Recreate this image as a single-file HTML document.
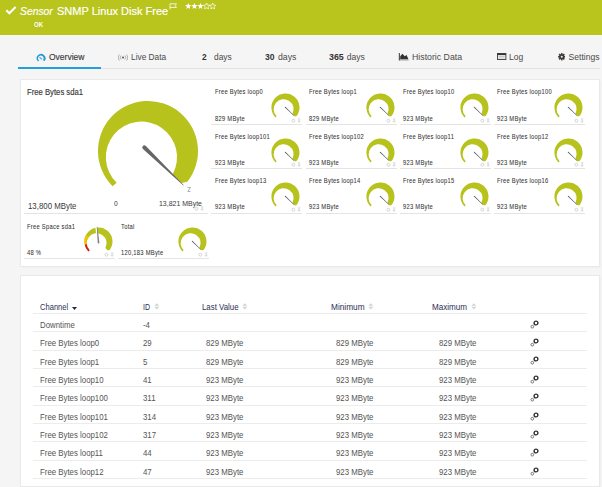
<!DOCTYPE html>
<html><head><meta charset="utf-8"><style>
*{margin:0;padding:0;box-sizing:border-box}
html,body{width:602px;height:487px;overflow:hidden;background:#f5f5f5;font-family:"Liberation Sans",sans-serif;}
.a{position:absolute;white-space:nowrap;line-height:1;transform-origin:0 0}
.card{position:absolute;left:20px;width:580px;background:#fff;box-shadow:0 0 0 1px #e9e9e9, 1px 1px 2px rgba(0,0,0,0.07)}
.tl{position:absolute;height:1px;background:#e4e4e4}
</style></head>
<body>
<div class="a" style="left:0;top:0;width:602px;height:35px;background:#b9c41c"></div>
<svg class="a" style="left:5px;top:6px" width="12" height="9" viewBox="0 0 12 9"><path d="M1.3 4.3 L4.3 7.3 L10.6 1.0" stroke="#fff" stroke-width="2.1" fill="none"/></svg>
<div class="a" style="left:20.20px;top:4.98px;font-size:11.6px;color:#fff;font-style:italic;transform:scaleX(0.891);-webkit-text-stroke:0.2px #fff;">Sensor</div>
<div class="a" style="left:56.50px;top:4.98px;font-size:11.6px;color:#fff;transform:scaleX(0.950);-webkit-text-stroke:0.2px #fff;">SNMP Linux Disk Free</div>
<svg class="a" style="left:169px;top:3px" width="9" height="7" viewBox="0 0 9 7"><path d="M1 6.5 V0.8 H7.5 L6 2.6 L7.5 4.4 H1" stroke="#fff" stroke-width="0.8" fill="none"/></svg>
<svg class="a" style="left:185px;top:2px" width="32" height="8" viewBox="0 0 32 8"><polygon points="3.30,1.00 4.17,3.10 6.44,3.28 4.71,4.76 5.24,6.97 3.30,5.79 1.36,6.97 1.89,4.76 0.16,3.28 2.43,3.10" fill="#fff"/><polygon points="9.40,1.00 10.27,3.10 12.54,3.28 10.81,4.76 11.34,6.97 9.40,5.79 7.46,6.97 7.99,4.76 6.26,3.28 8.53,3.10" fill="#fff"/><polygon points="15.50,1.00 16.37,3.10 18.64,3.28 16.91,4.76 17.44,6.97 15.50,5.79 13.56,6.97 14.09,4.76 12.36,3.28 14.63,3.10" fill="#fff"/><polygon points="21.60,1.00 22.47,3.10 24.74,3.28 23.01,4.76 23.54,6.97 21.60,5.79 19.66,6.97 20.19,4.76 18.46,3.28 20.73,3.10" fill="none" stroke="#fff" stroke-width="0.7"/><polygon points="27.70,1.00 28.57,3.10 30.84,3.28 29.11,4.76 29.64,6.97 27.70,5.79 25.76,6.97 26.29,4.76 24.56,3.28 26.83,3.10" fill="none" stroke="#fff" stroke-width="0.7"/></svg>
<div class="a" style="left:34.20px;top:20.87px;font-size:7px;color:#fff;font-weight:bold;transform:scaleX(0.867);">OK</div>
<div class="a" style="left:18px;top:68px;width:582px;height:1px;background:#e2e2e2"></div>
<div class="a" style="left:18px;top:67px;width:83px;height:2px;background:#23a0dc"></div>
<svg class="a" style="left:35.5px;top:53px;overflow:visible" width="10" height="9" viewBox="-5 -5 10 9"><g transform="translate(0.1 0.3) scale(0.088)"><path d="M -35.36 35.36 A 50 50 0 1 1 39.4 30.78 L 20 21 A 31 31 0 1 0 -23 24 Z" fill="#1f9ad6"/></g><path d="M -1.6 -0.8 L 1.0 1.2" stroke="#4aa6dc" stroke-width="1.1"/></svg>
<div class="a" style="left:48.90px;top:52.92px;font-size:8.6px;color:#3a3a3a;transform:scaleX(0.990);-webkit-text-stroke:0.15px #3a3a3a;">Overview</div>
<svg class="a" style="left:117.5px;top:53.5px" width="10" height="7" viewBox="0 0 10 7"><circle cx="5" cy="3.5" r="1" fill="#555"/><path d="M3.2 1.6 A2.6 2.6 0 0 0 3.2 5.4 M6.8 1.6 A2.6 2.6 0 0 1 6.8 5.4 M1.5 0.5 A4.2 4.2 0 0 0 1.5 6.5 M8.5 0.5 A4.2 4.2 0 0 1 8.5 6.5" stroke="#999" stroke-width="0.8" fill="none"/></svg>
<div class="a" style="left:130.60px;top:52.92px;font-size:8.6px;color:#4a4a4a;transform:scaleX(0.969);">Live Data</div>
<div class="a" style="left:202.40px;top:52.92px;font-size:8.6px;color:#333;font-weight:bold;transform:scaleX(0.962);">2</div>
<div class="a" style="left:213.60px;top:52.92px;font-size:8.6px;color:#4a4a4a;transform:scaleX(0.974);">days</div>
<div class="a" style="left:265.00px;top:52.92px;font-size:8.6px;color:#333;font-weight:bold;transform:scaleX(0.993);">30</div>
<div class="a" style="left:278.40px;top:52.92px;font-size:8.6px;color:#4a4a4a;transform:scaleX(1.008);">days</div>
<div class="a" style="left:329.30px;top:52.92px;font-size:8.6px;color:#333;font-weight:bold;transform:scaleX(1.025);">365</div>
<div class="a" style="left:346.70px;top:52.92px;font-size:8.6px;color:#4a4a4a;">days</div>
<svg class="a" style="left:398px;top:53px" width="11" height="8" viewBox="0 0 11 8"><path d="M1.4 0 V7.6" stroke="#555" stroke-width="1.2" fill="none"/><path d="M2.2 6.2 V3.2 L4.4 0.8 L6.8 3.3 L8.6 2.0 L10.2 5.8 V6.2 Z" fill="#333"/><path d="M2 6.9 H10.6" stroke="#9a9a9a" stroke-width="1.1"/></svg>
<div class="a" style="left:412.30px;top:52.92px;font-size:8.6px;color:#4a4a4a;transform:scaleX(1.018);">Historic Data</div>
<svg class="a" style="left:496.6px;top:53.2px" width="10" height="8" viewBox="0 0 10 8"><rect x="0.5" y="0.5" width="8.4" height="6" fill="none" stroke="#4a4a4a" stroke-width="1"/><rect x="0.5" y="0.5" width="8.4" height="1.6" fill="#333"/><path d="M1.6 3.5 H7.8 M1.6 5 H7.8" stroke="#bbb" stroke-width="0.8"/></svg>
<div class="a" style="left:509.00px;top:52.92px;font-size:8.6px;color:#4a4a4a;transform:scaleX(0.990);">Log</div>
<svg class="a" style="left:557.5px;top:53.0px" width="7.5" height="7.5" viewBox="-4 -4 8 8"><g fill="#3a3a3a"><circle r="2.7"/><rect x="-0.85" y="-3.9" width="1.7" height="2.2" transform="rotate(0)"/><rect x="-0.85" y="-3.9" width="1.7" height="2.2" transform="rotate(45)"/><rect x="-0.85" y="-3.9" width="1.7" height="2.2" transform="rotate(90)"/><rect x="-0.85" y="-3.9" width="1.7" height="2.2" transform="rotate(135)"/><rect x="-0.85" y="-3.9" width="1.7" height="2.2" transform="rotate(180)"/><rect x="-0.85" y="-3.9" width="1.7" height="2.2" transform="rotate(225)"/><rect x="-0.85" y="-3.9" width="1.7" height="2.2" transform="rotate(270)"/><rect x="-0.85" y="-3.9" width="1.7" height="2.2" transform="rotate(315)"/></g><circle r="1.1" fill="#f5f5f5"/></svg>
<div class="a" style="left:568.50px;top:52.92px;font-size:8.6px;color:#4a4a4a;">Settings</div>
<div class="card" style="left:21px;width:578px;top:80px;height:186px"></div>
<div class="card" style="left:21px;width:578px;top:276px;height:210px"></div>
<div class="a" style="left:27.00px;top:88.12px;font-size:8.6px;color:#3a3a3a;transform:scaleX(0.896);-webkit-text-stroke:0.15px #3a3a3a;">Free Bytes sda1</div>
<svg class="a" style="left:92.90px;top:95.75px;overflow:visible" width="110.00" height="110.00" viewBox="-55 -55 110 110"><path d="M -35.36 35.36 A 50 50 0 1 1 39.4 30.78 L 33.4 31.9 L 24.6 23.4 A 35.6 35.6 0 1 0 -31.37 31.72 Z" fill="#b7c21d"/><g transform="rotate(44)"><path d="M -5 -2.1 L 49.5 -0.3 L 49.5 0.3 L -5 2.1 A 2.1 2.1 0 0 1 -5 -2.1 Z" fill="#666"/></g></svg>
<div class="a" style="left:27.50px;top:202.86px;font-size:8.2px;color:#3a3a3a;transform:scaleX(0.959);">13,800 MByte</div>
<div class="a" style="left:113.70px;top:199.54px;font-size:7.4px;color:#3a3a3a;transform:scaleX(0.899);">0</div>
<div class="a" style="left:158.50px;top:199.54px;font-size:7.4px;color:#3a3a3a;transform:scaleX(0.942);">13,821 MByte</div>
<svg class="a" style="left:194.00px;top:206.00px" width="12" height="5" viewBox="0 0 12 5"><circle cx="2.4" cy="2.7" r="1.45" fill="none" stroke="#cfcfcf" stroke-width="0.9"/><path d="M6.9 0.9 H9.3 M8.1 0.9 V3.3 M6.7 3.3 H9.5 M8.1 3.3 V4.8" stroke="#d2d2d2" stroke-width="0.8"/></svg>
<svg class="a" style="left:187px;top:187px" width="4" height="5" viewBox="0 0 4 5"><path d="M0.5 0.5 H3.5 L0.8 4.5 H3.5" stroke="#8a96b0" stroke-width="0.7" fill="none"/></svg>
<div class="tl" style="left:24px;top:213px;width:184px"></div>
<div class="a" style="left:215.00px;top:89.31px;font-size:6.6px;color:#333333;transform:scaleX(0.88);letter-spacing:0.3px;-webkit-text-stroke:0.05px #383838;">Free Bytes loop0</div>
<div class="a" style="left:215.00px;top:115.61px;font-size:6.6px;color:#333333;transform:scaleX(0.88);letter-spacing:0.3px;-webkit-text-stroke:0.05px #383838;">829 MByte</div>
<svg class="a" style="left:270.15px;top:92.45px;overflow:visible" width="30.91" height="30.91" viewBox="-55 -55 110 110"><path d="M -35.36 35.36 A 50 50 0 1 1 39.4 30.78 L 33.4 31.9 L 24.6 23.4 A 35.6 35.6 0 1 0 -31.37 31.72 Z" fill="#b7c21d"/><g transform="rotate(44)"><path d="M -1 -1.8 L 42 -0.9 L 42 0.9 L -1 1.8 A 1.8 1.8 0 0 1 -1 -1.8 Z" fill="#555"/></g></svg>
<svg class="a" style="left:291.00px;top:118.10px" width="12" height="5" viewBox="0 0 12 5"><circle cx="2.4" cy="2.7" r="1.45" fill="none" stroke="#cfcfcf" stroke-width="0.9"/><path d="M6.9 0.9 H9.3 M8.1 0.9 V3.3 M6.7 3.3 H9.5 M8.1 3.3 V4.8" stroke="#d2d2d2" stroke-width="0.8"/></svg>
<div class="tl" style="left:211.00px;top:124.20px;width:91px"></div>
<div class="a" style="left:309.00px;top:89.31px;font-size:6.6px;color:#333333;transform:scaleX(0.88);letter-spacing:0.3px;-webkit-text-stroke:0.05px #383838;">Free Bytes loop1</div>
<div class="a" style="left:309.00px;top:115.61px;font-size:6.6px;color:#333333;transform:scaleX(0.88);letter-spacing:0.3px;-webkit-text-stroke:0.05px #383838;">829 MByte</div>
<svg class="a" style="left:364.65px;top:92.45px;overflow:visible" width="30.91" height="30.91" viewBox="-55 -55 110 110"><path d="M -35.36 35.36 A 50 50 0 1 1 39.4 30.78 L 33.4 31.9 L 24.6 23.4 A 35.6 35.6 0 1 0 -31.37 31.72 Z" fill="#b7c21d"/><g transform="rotate(44)"><path d="M -1 -1.8 L 42 -0.9 L 42 0.9 L -1 1.8 A 1.8 1.8 0 0 1 -1 -1.8 Z" fill="#555"/></g></svg>
<svg class="a" style="left:385.50px;top:118.10px" width="12" height="5" viewBox="0 0 12 5"><circle cx="2.4" cy="2.7" r="1.45" fill="none" stroke="#cfcfcf" stroke-width="0.9"/><path d="M6.9 0.9 H9.3 M8.1 0.9 V3.3 M6.7 3.3 H9.5 M8.1 3.3 V4.8" stroke="#d2d2d2" stroke-width="0.8"/></svg>
<div class="tl" style="left:305.50px;top:124.20px;width:91px"></div>
<div class="a" style="left:402.80px;top:89.31px;font-size:6.6px;color:#333333;transform:scaleX(0.88);letter-spacing:0.3px;-webkit-text-stroke:0.05px #383838;">Free Bytes loop10</div>
<div class="a" style="left:402.80px;top:115.61px;font-size:6.6px;color:#333333;transform:scaleX(0.88);letter-spacing:0.3px;-webkit-text-stroke:0.05px #383838;">923 MByte</div>
<svg class="a" style="left:459.15px;top:92.45px;overflow:visible" width="30.91" height="30.91" viewBox="-55 -55 110 110"><path d="M -35.36 35.36 A 50 50 0 1 1 39.4 30.78 L 33.4 31.9 L 24.6 23.4 A 35.6 35.6 0 1 0 -31.37 31.72 Z" fill="#b7c21d"/><g transform="rotate(44)"><path d="M -1 -1.8 L 42 -0.9 L 42 0.9 L -1 1.8 A 1.8 1.8 0 0 1 -1 -1.8 Z" fill="#555"/></g></svg>
<svg class="a" style="left:480.00px;top:118.10px" width="12" height="5" viewBox="0 0 12 5"><circle cx="2.4" cy="2.7" r="1.45" fill="none" stroke="#cfcfcf" stroke-width="0.9"/><path d="M6.9 0.9 H9.3 M8.1 0.9 V3.3 M6.7 3.3 H9.5 M8.1 3.3 V4.8" stroke="#d2d2d2" stroke-width="0.8"/></svg>
<div class="tl" style="left:400.00px;top:124.20px;width:91px"></div>
<div class="a" style="left:496.90px;top:89.31px;font-size:6.6px;color:#333333;transform:scaleX(0.88);letter-spacing:0.3px;-webkit-text-stroke:0.05px #383838;">Free Bytes loop100</div>
<div class="a" style="left:496.90px;top:115.61px;font-size:6.6px;color:#333333;transform:scaleX(0.88);letter-spacing:0.3px;-webkit-text-stroke:0.05px #383838;">923 MByte</div>
<svg class="a" style="left:553.14px;top:92.45px;overflow:visible" width="30.91" height="30.91" viewBox="-55 -55 110 110"><path d="M -35.36 35.36 A 50 50 0 1 1 39.4 30.78 L 33.4 31.9 L 24.6 23.4 A 35.6 35.6 0 1 0 -31.37 31.72 Z" fill="#b7c21d"/><g transform="rotate(44)"><path d="M -1 -1.8 L 42 -0.9 L 42 0.9 L -1 1.8 A 1.8 1.8 0 0 1 -1 -1.8 Z" fill="#555"/></g></svg>
<svg class="a" style="left:574.00px;top:118.10px" width="12" height="5" viewBox="0 0 12 5"><circle cx="2.4" cy="2.7" r="1.45" fill="none" stroke="#cfcfcf" stroke-width="0.9"/><path d="M6.9 0.9 H9.3 M8.1 0.9 V3.3 M6.7 3.3 H9.5 M8.1 3.3 V4.8" stroke="#d2d2d2" stroke-width="0.8"/></svg>
<div class="tl" style="left:494.00px;top:124.20px;width:91px"></div>
<div class="a" style="left:215.00px;top:133.56px;font-size:6.6px;color:#333333;transform:scaleX(0.88);letter-spacing:0.3px;-webkit-text-stroke:0.05px #383838;">Free Bytes loop101</div>
<div class="a" style="left:215.00px;top:159.86px;font-size:6.6px;color:#333333;transform:scaleX(0.88);letter-spacing:0.3px;-webkit-text-stroke:0.05px #383838;">923 MByte</div>
<svg class="a" style="left:270.15px;top:136.69px;overflow:visible" width="30.91" height="30.91" viewBox="-55 -55 110 110"><path d="M -35.36 35.36 A 50 50 0 1 1 39.4 30.78 L 33.4 31.9 L 24.6 23.4 A 35.6 35.6 0 1 0 -31.37 31.72 Z" fill="#b7c21d"/><g transform="rotate(44)"><path d="M -1 -1.8 L 42 -0.9 L 42 0.9 L -1 1.8 A 1.8 1.8 0 0 1 -1 -1.8 Z" fill="#555"/></g></svg>
<svg class="a" style="left:291.00px;top:162.35px" width="12" height="5" viewBox="0 0 12 5"><circle cx="2.4" cy="2.7" r="1.45" fill="none" stroke="#cfcfcf" stroke-width="0.9"/><path d="M6.9 0.9 H9.3 M8.1 0.9 V3.3 M6.7 3.3 H9.5 M8.1 3.3 V4.8" stroke="#d2d2d2" stroke-width="0.8"/></svg>
<div class="tl" style="left:211.00px;top:168.45px;width:91px"></div>
<div class="a" style="left:309.00px;top:133.56px;font-size:6.6px;color:#333333;transform:scaleX(0.88);letter-spacing:0.3px;-webkit-text-stroke:0.05px #383838;">Free Bytes loop102</div>
<div class="a" style="left:309.00px;top:159.86px;font-size:6.6px;color:#333333;transform:scaleX(0.88);letter-spacing:0.3px;-webkit-text-stroke:0.05px #383838;">923 MByte</div>
<svg class="a" style="left:364.65px;top:136.69px;overflow:visible" width="30.91" height="30.91" viewBox="-55 -55 110 110"><path d="M -35.36 35.36 A 50 50 0 1 1 39.4 30.78 L 33.4 31.9 L 24.6 23.4 A 35.6 35.6 0 1 0 -31.37 31.72 Z" fill="#b7c21d"/><g transform="rotate(44)"><path d="M -1 -1.8 L 42 -0.9 L 42 0.9 L -1 1.8 A 1.8 1.8 0 0 1 -1 -1.8 Z" fill="#555"/></g></svg>
<svg class="a" style="left:385.50px;top:162.35px" width="12" height="5" viewBox="0 0 12 5"><circle cx="2.4" cy="2.7" r="1.45" fill="none" stroke="#cfcfcf" stroke-width="0.9"/><path d="M6.9 0.9 H9.3 M8.1 0.9 V3.3 M6.7 3.3 H9.5 M8.1 3.3 V4.8" stroke="#d2d2d2" stroke-width="0.8"/></svg>
<div class="tl" style="left:305.50px;top:168.45px;width:91px"></div>
<div class="a" style="left:402.80px;top:133.56px;font-size:6.6px;color:#333333;transform:scaleX(0.88);letter-spacing:0.3px;-webkit-text-stroke:0.05px #383838;">Free Bytes loop11</div>
<div class="a" style="left:402.80px;top:159.86px;font-size:6.6px;color:#333333;transform:scaleX(0.88);letter-spacing:0.3px;-webkit-text-stroke:0.05px #383838;">923 MByte</div>
<svg class="a" style="left:459.15px;top:136.69px;overflow:visible" width="30.91" height="30.91" viewBox="-55 -55 110 110"><path d="M -35.36 35.36 A 50 50 0 1 1 39.4 30.78 L 33.4 31.9 L 24.6 23.4 A 35.6 35.6 0 1 0 -31.37 31.72 Z" fill="#b7c21d"/><g transform="rotate(44)"><path d="M -1 -1.8 L 42 -0.9 L 42 0.9 L -1 1.8 A 1.8 1.8 0 0 1 -1 -1.8 Z" fill="#555"/></g></svg>
<svg class="a" style="left:480.00px;top:162.35px" width="12" height="5" viewBox="0 0 12 5"><circle cx="2.4" cy="2.7" r="1.45" fill="none" stroke="#cfcfcf" stroke-width="0.9"/><path d="M6.9 0.9 H9.3 M8.1 0.9 V3.3 M6.7 3.3 H9.5 M8.1 3.3 V4.8" stroke="#d2d2d2" stroke-width="0.8"/></svg>
<div class="tl" style="left:400.00px;top:168.45px;width:91px"></div>
<div class="a" style="left:496.90px;top:133.56px;font-size:6.6px;color:#333333;transform:scaleX(0.88);letter-spacing:0.3px;-webkit-text-stroke:0.05px #383838;">Free Bytes loop12</div>
<div class="a" style="left:496.90px;top:159.86px;font-size:6.6px;color:#333333;transform:scaleX(0.88);letter-spacing:0.3px;-webkit-text-stroke:0.05px #383838;">923 MByte</div>
<svg class="a" style="left:553.14px;top:136.69px;overflow:visible" width="30.91" height="30.91" viewBox="-55 -55 110 110"><path d="M -35.36 35.36 A 50 50 0 1 1 39.4 30.78 L 33.4 31.9 L 24.6 23.4 A 35.6 35.6 0 1 0 -31.37 31.72 Z" fill="#b7c21d"/><g transform="rotate(44)"><path d="M -1 -1.8 L 42 -0.9 L 42 0.9 L -1 1.8 A 1.8 1.8 0 0 1 -1 -1.8 Z" fill="#555"/></g></svg>
<svg class="a" style="left:574.00px;top:162.35px" width="12" height="5" viewBox="0 0 12 5"><circle cx="2.4" cy="2.7" r="1.45" fill="none" stroke="#cfcfcf" stroke-width="0.9"/><path d="M6.9 0.9 H9.3 M8.1 0.9 V3.3 M6.7 3.3 H9.5 M8.1 3.3 V4.8" stroke="#d2d2d2" stroke-width="0.8"/></svg>
<div class="tl" style="left:494.00px;top:168.45px;width:91px"></div>
<div class="a" style="left:215.00px;top:178.11px;font-size:6.6px;color:#333333;transform:scaleX(0.88);letter-spacing:0.3px;-webkit-text-stroke:0.05px #383838;">Free Bytes loop13</div>
<div class="a" style="left:215.00px;top:204.41px;font-size:6.6px;color:#333333;transform:scaleX(0.88);letter-spacing:0.3px;-webkit-text-stroke:0.05px #383838;">923 MByte</div>
<svg class="a" style="left:270.15px;top:181.24px;overflow:visible" width="30.91" height="30.91" viewBox="-55 -55 110 110"><path d="M -35.36 35.36 A 50 50 0 1 1 39.4 30.78 L 33.4 31.9 L 24.6 23.4 A 35.6 35.6 0 1 0 -31.37 31.72 Z" fill="#b7c21d"/><g transform="rotate(44)"><path d="M -1 -1.8 L 42 -0.9 L 42 0.9 L -1 1.8 A 1.8 1.8 0 0 1 -1 -1.8 Z" fill="#555"/></g></svg>
<svg class="a" style="left:291.00px;top:206.90px" width="12" height="5" viewBox="0 0 12 5"><circle cx="2.4" cy="2.7" r="1.45" fill="none" stroke="#cfcfcf" stroke-width="0.9"/><path d="M6.9 0.9 H9.3 M8.1 0.9 V3.3 M6.7 3.3 H9.5 M8.1 3.3 V4.8" stroke="#d2d2d2" stroke-width="0.8"/></svg>
<div class="tl" style="left:211.00px;top:213.00px;width:91px"></div>
<div class="a" style="left:309.00px;top:178.11px;font-size:6.6px;color:#333333;transform:scaleX(0.88);letter-spacing:0.3px;-webkit-text-stroke:0.05px #383838;">Free Bytes loop14</div>
<div class="a" style="left:309.00px;top:204.41px;font-size:6.6px;color:#333333;transform:scaleX(0.88);letter-spacing:0.3px;-webkit-text-stroke:0.05px #383838;">923 MByte</div>
<svg class="a" style="left:364.65px;top:181.24px;overflow:visible" width="30.91" height="30.91" viewBox="-55 -55 110 110"><path d="M -35.36 35.36 A 50 50 0 1 1 39.4 30.78 L 33.4 31.9 L 24.6 23.4 A 35.6 35.6 0 1 0 -31.37 31.72 Z" fill="#b7c21d"/><g transform="rotate(44)"><path d="M -1 -1.8 L 42 -0.9 L 42 0.9 L -1 1.8 A 1.8 1.8 0 0 1 -1 -1.8 Z" fill="#555"/></g></svg>
<svg class="a" style="left:385.50px;top:206.90px" width="12" height="5" viewBox="0 0 12 5"><circle cx="2.4" cy="2.7" r="1.45" fill="none" stroke="#cfcfcf" stroke-width="0.9"/><path d="M6.9 0.9 H9.3 M8.1 0.9 V3.3 M6.7 3.3 H9.5 M8.1 3.3 V4.8" stroke="#d2d2d2" stroke-width="0.8"/></svg>
<div class="tl" style="left:305.50px;top:213.00px;width:91px"></div>
<div class="a" style="left:402.80px;top:178.11px;font-size:6.6px;color:#333333;transform:scaleX(0.88);letter-spacing:0.3px;-webkit-text-stroke:0.05px #383838;">Free Bytes loop15</div>
<div class="a" style="left:402.80px;top:204.41px;font-size:6.6px;color:#333333;transform:scaleX(0.88);letter-spacing:0.3px;-webkit-text-stroke:0.05px #383838;">923 MByte</div>
<svg class="a" style="left:459.15px;top:181.24px;overflow:visible" width="30.91" height="30.91" viewBox="-55 -55 110 110"><path d="M -35.36 35.36 A 50 50 0 1 1 39.4 30.78 L 33.4 31.9 L 24.6 23.4 A 35.6 35.6 0 1 0 -31.37 31.72 Z" fill="#b7c21d"/><g transform="rotate(44)"><path d="M -1 -1.8 L 42 -0.9 L 42 0.9 L -1 1.8 A 1.8 1.8 0 0 1 -1 -1.8 Z" fill="#555"/></g></svg>
<svg class="a" style="left:480.00px;top:206.90px" width="12" height="5" viewBox="0 0 12 5"><circle cx="2.4" cy="2.7" r="1.45" fill="none" stroke="#cfcfcf" stroke-width="0.9"/><path d="M6.9 0.9 H9.3 M8.1 0.9 V3.3 M6.7 3.3 H9.5 M8.1 3.3 V4.8" stroke="#d2d2d2" stroke-width="0.8"/></svg>
<div class="tl" style="left:400.00px;top:213.00px;width:91px"></div>
<div class="a" style="left:496.90px;top:178.11px;font-size:6.6px;color:#333333;transform:scaleX(0.88);letter-spacing:0.3px;-webkit-text-stroke:0.05px #383838;">Free Bytes loop16</div>
<div class="a" style="left:496.90px;top:204.41px;font-size:6.6px;color:#333333;transform:scaleX(0.88);letter-spacing:0.3px;-webkit-text-stroke:0.05px #383838;">923 MByte</div>
<svg class="a" style="left:553.14px;top:181.24px;overflow:visible" width="30.91" height="30.91" viewBox="-55 -55 110 110"><path d="M -35.36 35.36 A 50 50 0 1 1 39.4 30.78 L 33.4 31.9 L 24.6 23.4 A 35.6 35.6 0 1 0 -31.37 31.72 Z" fill="#b7c21d"/><g transform="rotate(44)"><path d="M -1 -1.8 L 42 -0.9 L 42 0.9 L -1 1.8 A 1.8 1.8 0 0 1 -1 -1.8 Z" fill="#555"/></g></svg>
<svg class="a" style="left:574.00px;top:206.90px" width="12" height="5" viewBox="0 0 12 5"><circle cx="2.4" cy="2.7" r="1.45" fill="none" stroke="#cfcfcf" stroke-width="0.9"/><path d="M6.9 0.9 H9.3 M8.1 0.9 V3.3 M6.7 3.3 H9.5 M8.1 3.3 V4.8" stroke="#d2d2d2" stroke-width="0.8"/></svg>
<div class="tl" style="left:494.00px;top:213.00px;width:91px"></div>
<div class="a" style="left:26.80px;top:223.91px;font-size:6.6px;color:#333333;transform:scaleX(0.88);letter-spacing:0.3px;-webkit-text-stroke:0.05px #383838;">Free Space sda1</div>
<div class="a" style="left:26.80px;top:249.61px;font-size:6.6px;color:#333333;transform:scaleX(0.88);letter-spacing:0.3px;-webkit-text-stroke:0.05px #383838;">48 %</div>
<svg class="a" style="left:82.64px;top:226.14px;overflow:visible" width="30.91" height="30.91" viewBox="-55 -55 110 110"><path d="M -35.36 35.36 A 50 50 0 1 1 39.4 30.78 L 33.4 31.9 L 24.6 23.4 A 35.6 35.6 0 1 0 -31.37 31.72 Z" fill="#b7c21d"/><clipPath id="cy1"><polygon points="0,0 -53.93,-26.30 -55.33,-23.20 -56.56,-20.03 -57.60,-16.79 -58.46,-13.50 -59.13,-10.16 -59.61,-6.79 -59.90,-3.40 -60.00,-0.00 -59.90,3.40 -59.61,6.79 -59.13,10.16 -58.46,13.50"/></clipPath><clipPath id="cr1"><polygon points="0,0 -58.46,13.50 -57.40,17.46 -56.08,21.34 -54.49,25.12 -52.65,28.78 -50.56,32.31 -48.23,35.69 -45.68,38.90 -42.92,41.93 -39.95,44.76 -36.80,47.39 -33.48,49.79 -30.00,51.96"/></clipPath><path d="M -35.36 35.36 A 50 50 0 1 1 39.4 30.78 L 33.4 31.9 L 24.6 23.4 A 35.6 35.6 0 1 0 -31.37 31.72 Z" fill="#f2c200" clip-path="url(#cy1)"/><path d="M -35.36 35.36 A 50 50 0 1 1 39.4 30.78 L 33.4 31.9 L 24.6 23.4 A 35.6 35.6 0 1 0 -31.37 31.72 Z" fill="#e3101a" clip-path="url(#cr1)"/><g transform="rotate(-95.4)"><rect x="28" y="-6" width="27" height="4.5" fill="#fff"/></g><g transform="rotate(-95.4)"><path d="M -4 -3.0 L 53 -0.9 L 53 0.9 L -4 3.0 A 3.0 3.0 0 0 1 -4 -3.0 Z" fill="#808080"/></g></svg>
<svg class="a" style="left:103.50px;top:252.10px" width="12" height="5" viewBox="0 0 12 5"><circle cx="2.4" cy="2.7" r="1.45" fill="none" stroke="#cfcfcf" stroke-width="0.9"/><path d="M6.9 0.9 H9.3 M8.1 0.9 V3.3 M6.7 3.3 H9.5 M8.1 3.3 V4.8" stroke="#d2d2d2" stroke-width="0.8"/></svg>
<div class="tl" style="left:23.50px;top:258.20px;width:91px"></div>
<div class="a" style="left:121.30px;top:223.91px;font-size:6.6px;color:#333333;transform:scaleX(0.88);letter-spacing:0.3px;-webkit-text-stroke:0.05px #383838;">Total</div>
<div class="a" style="left:121.30px;top:249.61px;font-size:6.6px;color:#333333;transform:scaleX(0.88);letter-spacing:0.3px;-webkit-text-stroke:0.05px #383838;">120,183 MByte</div>
<svg class="a" style="left:176.64px;top:226.14px;overflow:visible" width="30.91" height="30.91" viewBox="-55 -55 110 110"><path d="M -35.36 35.36 A 50 50 0 1 1 39.4 30.78 L 33.4 31.9 L 24.6 23.4 A 35.6 35.6 0 1 0 -31.37 31.72 Z" fill="#b7c21d"/><g transform="rotate(44)"><path d="M -1 -1.8 L 42 -0.9 L 42 0.9 L -1 1.8 A 1.8 1.8 0 0 1 -1 -1.8 Z" fill="#555"/></g></svg>
<svg class="a" style="left:197.50px;top:252.10px" width="12" height="5" viewBox="0 0 12 5"><circle cx="2.4" cy="2.7" r="1.45" fill="none" stroke="#cfcfcf" stroke-width="0.9"/><path d="M6.9 0.9 H9.3 M8.1 0.9 V3.3 M6.7 3.3 H9.5 M8.1 3.3 V4.8" stroke="#d2d2d2" stroke-width="0.8"/></svg>
<div class="tl" style="left:117.50px;top:258.20px;width:91px"></div>
<div class="a" style="left:40.00px;top:302.98px;font-size:9.0px;color:#2c2f55;transform:scaleX(0.841);">Channel</div>
<svg class="a" style="left:71.8px;top:306.8px" width="5" height="3" viewBox="0 0 5 3"><path d="M0 0 H5 L2.5 3 Z" fill="#25284d"/></svg>
<div class="a" style="left:143.00px;top:302.98px;font-size:9.0px;color:#2c2f55;transform:scaleX(0.778);">ID</div>
<svg class="a" style="left:153.70px;top:303px" width="6" height="7" viewBox="0 0 6 7"><path d="M0.3 2.8 L2.8 0.2 L5.3 2.8 Z M0.3 3.8 L2.8 6.5 L5.3 3.8 Z" fill="#d3d3d3"/></svg>
<div class="a" style="left:201.80px;top:302.98px;font-size:9.0px;color:#2c2f55;transform:scaleX(0.874);">Last Value</div>
<svg class="a" style="left:242.10px;top:303px" width="6" height="7" viewBox="0 0 6 7"><path d="M0.3 2.8 L2.8 0.2 L5.3 2.8 Z M0.3 3.8 L2.8 6.5 L5.3 3.8 Z" fill="#d3d3d3"/></svg>
<div class="a" style="left:330.50px;top:302.98px;font-size:9.0px;color:#2c2f55;transform:scaleX(0.920);">Minimum</div>
<svg class="a" style="left:367.80px;top:303px" width="6" height="7" viewBox="0 0 6 7"><path d="M0.3 2.8 L2.8 0.2 L5.3 2.8 Z M0.3 3.8 L2.8 6.5 L5.3 3.8 Z" fill="#d3d3d3"/></svg>
<div class="a" style="left:431.70px;top:302.98px;font-size:9.0px;color:#2c2f55;transform:scaleX(0.900);">Maximum</div>
<svg class="a" style="left:471.00px;top:303px" width="6" height="7" viewBox="0 0 6 7"><path d="M0.3 2.8 L2.8 0.2 L5.3 2.8 Z M0.3 3.8 L2.8 6.5 L5.3 3.8 Z" fill="#d3d3d3"/></svg>
<div class="tl" style="left:33px;top:313px;width:554px;background:#ececec"></div>
<div class="a" style="left:39.60px;top:320.88px;font-size:9.0px;color:#555;transform:scaleX(0.87);">Downtime</div>
<div class="a" style="left:143.00px;top:320.88px;font-size:9.0px;color:#555;transform:scaleX(0.87);">-4</div>
<svg class="a" style="left:529.5px;top:319.70px" width="9" height="9" viewBox="0 0 9 9"><circle cx="6" cy="3" r="1.9" fill="none" stroke="#333" stroke-width="1.4"/><circle cx="2.3" cy="6.7" r="1.35" fill="none" stroke="#777" stroke-width="1"/></svg>
<div class="tl" style="left:33px;top:331.20px;width:554px;background:#ececec"></div>
<div class="a" style="left:39.60px;top:339.24px;font-size:9.0px;color:#555;transform:scaleX(0.87);">Free Bytes loop0</div>
<div class="a" style="left:143.00px;top:339.24px;font-size:9.0px;color:#555;transform:scaleX(0.87);">29</div>
<div class="a" style="left:206.00px;top:339.24px;font-size:9.0px;color:#555;transform:scaleX(0.87);">829 MByte</div>
<div class="a" style="left:335.50px;top:339.24px;font-size:9.0px;color:#555;transform:scaleX(0.87);">829 MByte</div>
<div class="a" style="left:438.70px;top:339.24px;font-size:9.0px;color:#555;transform:scaleX(0.87);">829 MByte</div>
<svg class="a" style="left:529.5px;top:338.06px" width="9" height="9" viewBox="0 0 9 9"><circle cx="6" cy="3" r="1.9" fill="none" stroke="#333" stroke-width="1.4"/><circle cx="2.3" cy="6.7" r="1.35" fill="none" stroke="#777" stroke-width="1"/></svg>
<div class="tl" style="left:33px;top:349.56px;width:554px;background:#ececec"></div>
<div class="a" style="left:39.60px;top:357.60px;font-size:9.0px;color:#555;transform:scaleX(0.87);">Free Bytes loop1</div>
<div class="a" style="left:143.00px;top:357.60px;font-size:9.0px;color:#555;transform:scaleX(0.87);">5</div>
<div class="a" style="left:206.00px;top:357.60px;font-size:9.0px;color:#555;transform:scaleX(0.87);">829 MByte</div>
<div class="a" style="left:335.50px;top:357.60px;font-size:9.0px;color:#555;transform:scaleX(0.87);">829 MByte</div>
<div class="a" style="left:438.70px;top:357.60px;font-size:9.0px;color:#555;transform:scaleX(0.87);">829 MByte</div>
<svg class="a" style="left:529.5px;top:356.42px" width="9" height="9" viewBox="0 0 9 9"><circle cx="6" cy="3" r="1.9" fill="none" stroke="#333" stroke-width="1.4"/><circle cx="2.3" cy="6.7" r="1.35" fill="none" stroke="#777" stroke-width="1"/></svg>
<div class="tl" style="left:33px;top:367.92px;width:554px;background:#ececec"></div>
<div class="a" style="left:39.60px;top:375.96px;font-size:9.0px;color:#555;transform:scaleX(0.87);">Free Bytes loop10</div>
<div class="a" style="left:143.00px;top:375.96px;font-size:9.0px;color:#555;transform:scaleX(0.87);">41</div>
<div class="a" style="left:206.00px;top:375.96px;font-size:9.0px;color:#555;transform:scaleX(0.87);">923 MByte</div>
<div class="a" style="left:335.50px;top:375.96px;font-size:9.0px;color:#555;transform:scaleX(0.87);">923 MByte</div>
<div class="a" style="left:438.70px;top:375.96px;font-size:9.0px;color:#555;transform:scaleX(0.87);">923 MByte</div>
<svg class="a" style="left:529.5px;top:374.78px" width="9" height="9" viewBox="0 0 9 9"><circle cx="6" cy="3" r="1.9" fill="none" stroke="#333" stroke-width="1.4"/><circle cx="2.3" cy="6.7" r="1.35" fill="none" stroke="#777" stroke-width="1"/></svg>
<div class="tl" style="left:33px;top:386.28px;width:554px;background:#ececec"></div>
<div class="a" style="left:39.60px;top:394.32px;font-size:9.0px;color:#555;transform:scaleX(0.87);">Free Bytes loop100</div>
<div class="a" style="left:143.00px;top:394.32px;font-size:9.0px;color:#555;transform:scaleX(0.87);">311</div>
<div class="a" style="left:206.00px;top:394.32px;font-size:9.0px;color:#555;transform:scaleX(0.87);">923 MByte</div>
<div class="a" style="left:335.50px;top:394.32px;font-size:9.0px;color:#555;transform:scaleX(0.87);">923 MByte</div>
<div class="a" style="left:438.70px;top:394.32px;font-size:9.0px;color:#555;transform:scaleX(0.87);">923 MByte</div>
<svg class="a" style="left:529.5px;top:393.14px" width="9" height="9" viewBox="0 0 9 9"><circle cx="6" cy="3" r="1.9" fill="none" stroke="#333" stroke-width="1.4"/><circle cx="2.3" cy="6.7" r="1.35" fill="none" stroke="#777" stroke-width="1"/></svg>
<div class="tl" style="left:33px;top:404.64px;width:554px;background:#ececec"></div>
<div class="a" style="left:39.60px;top:412.68px;font-size:9.0px;color:#555;transform:scaleX(0.87);">Free Bytes loop101</div>
<div class="a" style="left:143.00px;top:412.68px;font-size:9.0px;color:#555;transform:scaleX(0.87);">314</div>
<div class="a" style="left:206.00px;top:412.68px;font-size:9.0px;color:#555;transform:scaleX(0.87);">923 MByte</div>
<div class="a" style="left:335.50px;top:412.68px;font-size:9.0px;color:#555;transform:scaleX(0.87);">923 MByte</div>
<div class="a" style="left:438.70px;top:412.68px;font-size:9.0px;color:#555;transform:scaleX(0.87);">923 MByte</div>
<svg class="a" style="left:529.5px;top:411.50px" width="9" height="9" viewBox="0 0 9 9"><circle cx="6" cy="3" r="1.9" fill="none" stroke="#333" stroke-width="1.4"/><circle cx="2.3" cy="6.7" r="1.35" fill="none" stroke="#777" stroke-width="1"/></svg>
<div class="tl" style="left:33px;top:423.00px;width:554px;background:#ececec"></div>
<div class="a" style="left:39.60px;top:431.04px;font-size:9.0px;color:#555;transform:scaleX(0.87);">Free Bytes loop102</div>
<div class="a" style="left:143.00px;top:431.04px;font-size:9.0px;color:#555;transform:scaleX(0.87);">317</div>
<div class="a" style="left:206.00px;top:431.04px;font-size:9.0px;color:#555;transform:scaleX(0.87);">923 MByte</div>
<div class="a" style="left:335.50px;top:431.04px;font-size:9.0px;color:#555;transform:scaleX(0.87);">923 MByte</div>
<div class="a" style="left:438.70px;top:431.04px;font-size:9.0px;color:#555;transform:scaleX(0.87);">923 MByte</div>
<svg class="a" style="left:529.5px;top:429.86px" width="9" height="9" viewBox="0 0 9 9"><circle cx="6" cy="3" r="1.9" fill="none" stroke="#333" stroke-width="1.4"/><circle cx="2.3" cy="6.7" r="1.35" fill="none" stroke="#777" stroke-width="1"/></svg>
<div class="tl" style="left:33px;top:441.36px;width:554px;background:#ececec"></div>
<div class="a" style="left:39.60px;top:449.40px;font-size:9.0px;color:#555;transform:scaleX(0.87);">Free Bytes loop11</div>
<div class="a" style="left:143.00px;top:449.40px;font-size:9.0px;color:#555;transform:scaleX(0.87);">44</div>
<div class="a" style="left:206.00px;top:449.40px;font-size:9.0px;color:#555;transform:scaleX(0.87);">923 MByte</div>
<div class="a" style="left:335.50px;top:449.40px;font-size:9.0px;color:#555;transform:scaleX(0.87);">923 MByte</div>
<div class="a" style="left:438.70px;top:449.40px;font-size:9.0px;color:#555;transform:scaleX(0.87);">923 MByte</div>
<svg class="a" style="left:529.5px;top:448.22px" width="9" height="9" viewBox="0 0 9 9"><circle cx="6" cy="3" r="1.9" fill="none" stroke="#333" stroke-width="1.4"/><circle cx="2.3" cy="6.7" r="1.35" fill="none" stroke="#777" stroke-width="1"/></svg>
<div class="tl" style="left:33px;top:459.72px;width:554px;background:#ececec"></div>
<div class="a" style="left:39.60px;top:467.76px;font-size:9.0px;color:#555;transform:scaleX(0.87);">Free Bytes loop12</div>
<div class="a" style="left:143.00px;top:467.76px;font-size:9.0px;color:#555;transform:scaleX(0.87);">47</div>
<div class="a" style="left:206.00px;top:467.76px;font-size:9.0px;color:#555;transform:scaleX(0.87);">923 MByte</div>
<div class="a" style="left:335.50px;top:467.76px;font-size:9.0px;color:#555;transform:scaleX(0.87);">923 MByte</div>
<div class="a" style="left:438.70px;top:467.76px;font-size:9.0px;color:#555;transform:scaleX(0.87);">923 MByte</div>
<svg class="a" style="left:529.5px;top:466.58px" width="9" height="9" viewBox="0 0 9 9"><circle cx="6" cy="3" r="1.9" fill="none" stroke="#333" stroke-width="1.4"/><circle cx="2.3" cy="6.7" r="1.35" fill="none" stroke="#777" stroke-width="1"/></svg>
<div class="tl" style="left:33px;top:478.08px;width:554px;background:#ececec"></div>
</body></html>
